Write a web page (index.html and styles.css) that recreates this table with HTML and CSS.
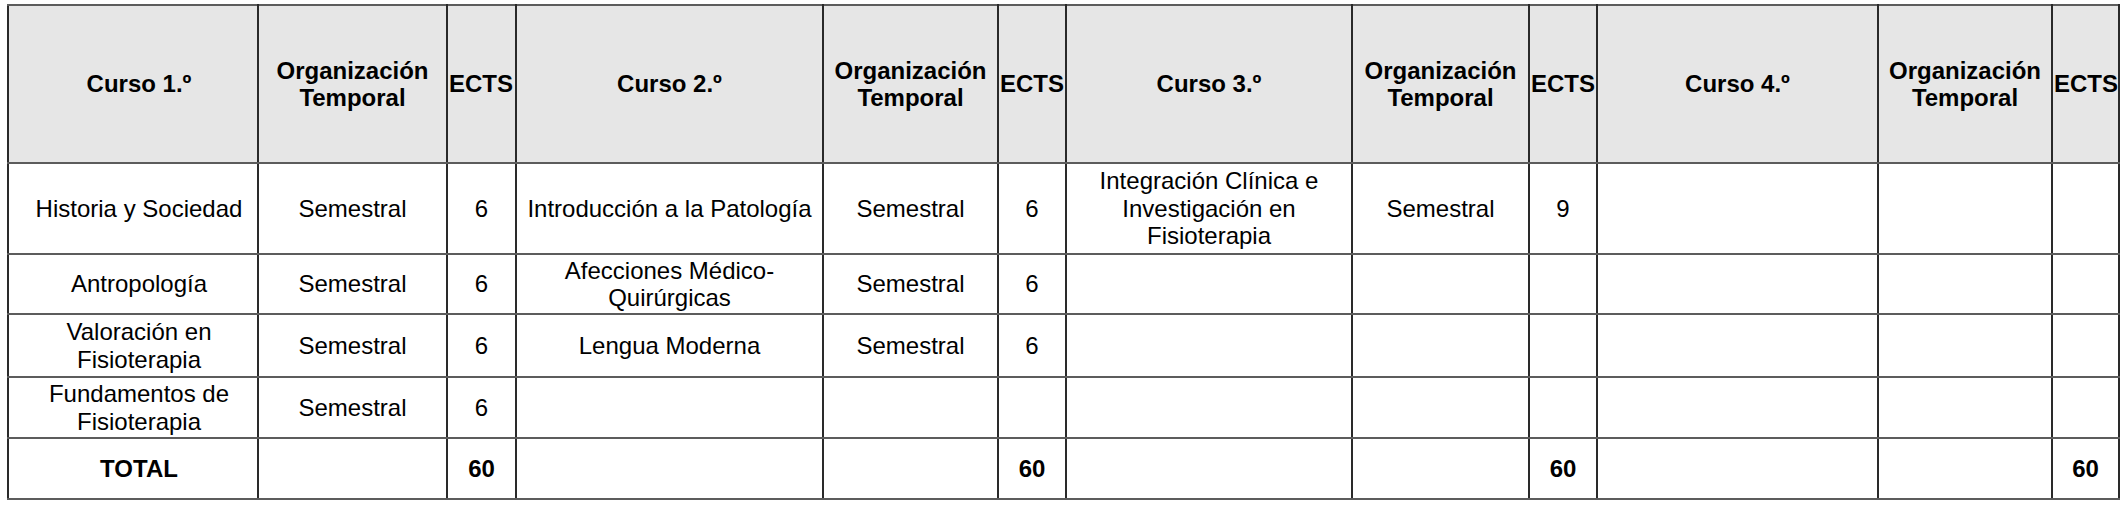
FILE: index.html
```html
<!DOCTYPE html>
<html lang="es">
<head>
<meta charset="utf-8">
<title>Plan de estudios</title>
<link rel="stylesheet" href="styles.css">
</head>
<body>
<table class="plan">
  <colgroup>
    <col class="c-name1"><col class="c-org1"><col class="c-ects1">
    <col class="c-name2"><col class="c-org2"><col class="c-ects2">
    <col class="c-name3"><col class="c-org3"><col class="c-ects3">
    <col class="c-name4"><col class="c-org4"><col class="c-ects4">
  </colgroup>
  <thead>
    <tr class="r-head">
      <th class="first">Curso 1.º</th><th>Organización Temporal</th><th class="ects">ECTS</th>
      <th>Curso 2.º</th><th>Organización Temporal</th><th class="ects">ECTS</th>
      <th>Curso 3.º</th><th>Organización Temporal</th><th class="ects">ECTS</th>
      <th>Curso 4.º</th><th>Organización Temporal</th><th class="ects">ECTS</th>
    </tr>
  </thead>
  <tbody>
    <tr class="r-1">
      <td class="first">Historia y Sociedad</td><td>Semestral</td><td class="ects">6</td>
      <td class="nowrap">Introducción a la Patología</td><td>Semestral</td><td class="ects">6</td>
      <td>Integración Clínica e Investigación en Fisioterapia</td><td>Semestral</td><td class="ects">9</td>
      <td></td><td></td><td class="ects"></td>
    </tr>
    <tr class="r-2">
      <td class="first">Antropología</td><td>Semestral</td><td class="ects">6</td>
      <td>Afecciones Médico-Quirúrgicas</td><td>Semestral</td><td class="ects">6</td>
      <td></td><td></td><td class="ects"></td>
      <td></td><td></td><td class="ects"></td>
    </tr>
    <tr class="r-3">
      <td class="first">Valoración en Fisioterapia</td><td>Semestral</td><td class="ects">6</td>
      <td>Lengua Moderna</td><td>Semestral</td><td class="ects">6</td>
      <td></td><td></td><td class="ects"></td>
      <td></td><td></td><td class="ects"></td>
    </tr>
    <tr class="r-4">
      <td class="first">Fundamentos de Fisioterapia</td><td>Semestral</td><td class="ects">6</td>
      <td></td><td></td><td class="ects"></td>
      <td></td><td></td><td class="ects"></td>
      <td></td><td></td><td class="ects"></td>
    </tr>
    <tr class="r-total">
      <td class="first bold">TOTAL</td><td></td><td class="ects bold">60</td>
      <td></td><td></td><td class="ects bold">60</td>
      <td></td><td></td><td class="ects bold">60</td>
      <td></td><td></td><td class="ects bold">60</td>
    </tr>
  </tbody>
</table>
</body>
</html>
```
FILE: styles.css
```css
html, body {
  margin: 0;
  padding: 0;
  background: #ffffff;
}

body {
  padding: 4px 0 0 7px;
  font-family: "Liberation Sans", Arial, sans-serif;
  color: #000000;
}

.plan {
  border-collapse: collapse;
  table-layout: fixed;
  width: 2113px;
  border: 2px solid #111111;
  font-size: 24px;
  line-height: 27.5px;
}

.c-name1 { width: 250px; }
.c-org1  { width: 189px; }
.c-ects1 { width: 69px; }
.c-name2 { width: 307px; }
.c-org2  { width: 175px; }
.c-ects2 { width: 68px; }
.c-name3 { width: 286px; }
.c-org3  { width: 177px; }
.c-ects3 { width: 68px; }
.c-name4 { width: 281px; }
.c-org4  { width: 174px; }
.c-ects4 { width: 67px; }

.plan th,
.plan td {
  border-left: 2px solid #2a2a2a;
  border-right: 2px solid #2a2a2a;
  border-top: 2px solid #5c5c5c;
  border-bottom: 2px solid #5c5c5c;
  padding: 0 8px;
  text-align: center;
  vertical-align: middle;
  overflow: hidden;
}

.plan th {
  background: #e6e6e6;
  font-weight: bold;
}

.plan .first {
  padding: 0 2px 0 14px;
}

.plan .ects {
  padding: 0;
}

.plan th.ects {
  text-align: left;
  padding-left: 1px;
}

.nowrap {
  white-space: nowrap;
}

.bold {
  font-weight: bold;
}

.r-head  { height: 158px; }
.r-1     { height: 91px; }
.r-2     { height: 60px; }
.r-3     { height: 63px; }
.r-4     { height: 61px; }
.r-total { height: 61px; }

.r-4 td {
  border-top-color: #000000;
}
```
